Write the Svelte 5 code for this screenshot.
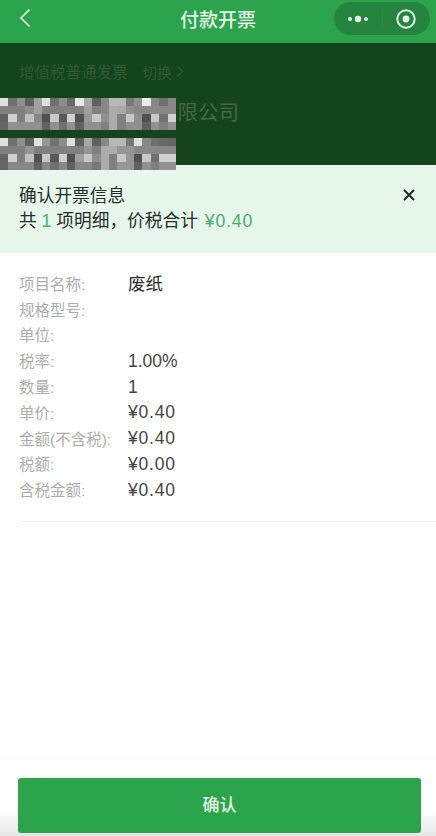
<script lang="ts">
	const rows = [
		{ label: '项目名称:', value: '废纸', big: true },
		{ label: '规格型号:', value: '' },
		{ label: '单位:', value: '' },
		{ label: '税率:', value: '1.00%' },
		{ label: '数量:', value: '1' },
		{ label: '单价:', value: '¥0.40', money: true },
		{ label: '金额(不含税):', value: '¥0.40', money: true },
		{ label: '税额:', value: '¥0.00', money: true },
		{ label: '含税金额:', value: '¥0.40', money: true }
	];

	// gray levels of the blurred-out company name, one row per line
	const mosaicA = [
		[224, 112, 144, 96, 160, 224, 112, 140, 104, 232, 168, 96, 136, 184, 184, 120, 144, 236, 136, 112, 136],
		[128, 128, 128, 140, 160, 128, 128, 128, 128, 128, 160, 128, 136, 172, 168, 144, 136, 136, 136, 136, 136],
		[96, 208, 128, 192, 136, 80, 200, 88, 208, 80, 152, 200, 144, 172, 128, 200, 144, 80, 200, 112, 208],
		[100, 144, 144, 144, 144, 96, 144, 112, 144, 96, 144, 144, 128, 172, 128, 144, 144, 96, 144, 128, 144]
	];
	const mosaicB = [
		[224, 112, 144, 96, 224, 150, 112, 140, 224, 96, 168, 96, 136, 184, 184, 120, 224, 136, 112, 104, 100],
		[128, 128, 128, 150, 128, 128, 128, 128, 128, 128, 150, 128, 172, 172, 150, 150, 136, 136, 136, 136, 136],
		[100, 208, 128, 192, 80, 200, 88, 208, 80, 160, 200, 144, 172, 128, 200, 150, 80, 200, 112, 208, 208],
		[100, 136, 136, 136, 96, 136, 112, 136, 96, 136, 136, 120, 172, 128, 150, 150, 96, 144, 128, 144, 144]
	];
	const CELL_W = 176 / 21;
</script>

{#snippet mosaic(cells: number[][], cls: string)}
	<svg class="mosaic {cls}" width="176" height="32" viewBox="0 0 176 32" shape-rendering="crispEdges">
		{#each cells as row, r}
			{#each row as g, c}
				<rect x={c * CELL_W} y={r * 8} width={CELL_W + 0.5} height="8.5" fill="rgb({g},{g},{g})" />
			{/each}
		{/each}
	</svg>
{/snippet}

<div class="page">
	<header class="nav">
		<svg class="back" width="12" height="20" viewBox="0 0 12 20">
			<path d="M10.5 1.5 L2 10 L10.5 18.5" fill="none" stroke="#dff2e3" stroke-width="1.7" />
		</svg>
		<h1>付款开票</h1>
		<div class="capsule">
			<svg width="22" height="8" viewBox="0 0 22 8">
				<circle cx="3" cy="4" r="2" fill="#e6f5e9" />
				<circle cx="11" cy="4" r="3.2" fill="#e6f5e9" />
				<circle cx="19" cy="4" r="2" fill="#e6f5e9" />
			</svg>
			<span class="sep"></span>
			<svg width="22" height="22" viewBox="0 0 22 22">
				<circle cx="11" cy="11" r="8.7" fill="none" stroke="#e6f5e9" stroke-width="2" />
				<circle cx="11" cy="11" r="3.4" fill="#e6f5e9" />
			</svg>
		</div>
	</header>

	<section class="invoice">
		<div class="type">
			<span>增值税普通发票</span>
			<span class="switch">切换</span>
			<svg width="8" height="13" viewBox="0 0 8 13">
				<path d="M1.5 1.5 L6.5 6.5 L1.5 11.5" fill="none" stroke="#2f5c37" stroke-width="1.2" />
			</svg>
		</div>
		<div class="company">有限公司</div>
		{@render mosaic(mosaicA, 'first')}
		{@render mosaic(mosaicB, 'second')}
	</section>

	<section class="notice">
		<div class="notice-text">
			<div>确认开票信息</div>
			<div>共 <em>1</em> 项明细，价税合计 <em class="total">¥0.40</em></div>
		</div>
		<svg class="close" width="12" height="12" viewBox="0 0 12 12">
			<path d="M1 1 L11 11 M11 1 L1 11" stroke="#1f2a22" stroke-width="2" />
		</svg>
	</section>

	<main class="detail">
		{#each rows as row}
			<div class="row">
				<span class="label">{row.label}</span>
				<span class="value" class:big={row.big} class:money={row.money}>{row.value}</span>
			</div>
		{/each}
		<div class="divider"></div>
	</main>

	<footer class="foot">
		<button>确认</button>
	</footer>
</div>

<style>
	:global(body) {
		margin: 0;
		background: #fff;
	}

	.page {
		display: flex;
		flex-direction: column;
		height: 836px;
		overflow: hidden;
		font-family: "Liberation Sans", "Noto Sans CJK SC", sans-serif;
	}

	.nav {
		position: relative;
		flex: none;
		height: 43px;
		display: flex;
		align-items: center;
		justify-content: center;
		background: #2ca44c;
	}

	.back {
		position: absolute;
		left: 19px;
		top: 8px;
	}

	h1 {
		margin: -6px 0 0;
		font-size: 19px;
		font-weight: 500;
		color: #e4f4e8;
	}

	.capsule {
		position: absolute;
		left: 334px;
		top: 2px;
		width: 96px;
		height: 33px;
		box-sizing: border-box;
		padding: 0 13px 0 13px;
		display: flex;
		align-items: center;
		justify-content: space-between;
		border-radius: 17px;
		background: #25853f;
	}

	.sep {
		width: 1px;
		height: 20px;
		background: #278b42;
	}

	.invoice {
		position: relative;
		flex: none;
		height: 122px;
		box-sizing: border-box;
		padding: 17px 0 0 19px;
		background: #14431c;
		color: #2f5c37;
	}

	.type {
		display: flex;
		align-items: center;
		height: 22px;
		font-size: 15.5px;
	}

	.switch {
		margin: 0 4px 0 15px;
		font-size: 14.5px;
	}

	.company {
		margin: 16px 0 0 138px;
		font-size: 20.5px;
		line-height: 30px;
		color: #43694a;
		white-space: nowrap;
	}

	.mosaic {
		position: absolute;
		left: 0;
		display: block;
		filter: blur(0.7px);
	}

	.first {
		top: 55px;
	}

	.second {
		top: 95px;
	}

	.notice {
		flex: none;
		height: 88px;
		box-sizing: border-box;
		padding: 18px 21px 0 19px;
		display: flex;
		justify-content: space-between;
		align-items: flex-start;
		background: #e8f7ec;
		color: #262d28;
		font-size: 17.7px;
		line-height: 26px;
	}

	.notice-text > div + div {
		margin-top: -1px;
	}

	.notice em {
		font-style: normal;
		color: #4cad6d;
	}

	.notice .total {
		margin-left: 2px;
		letter-spacing: 0.8px;
	}

	.close {
		margin-top: 6px;
	}

	.detail {
		flex: 1;
		padding: 17px 0 0 19px;
	}

	.row {
		display: flex;
		align-items: center;
		height: 25.8px;
	}

	.label {
		flex: none;
		width: 109px;
		font-size: 15.5px;
		color: #adadad;
		white-space: nowrap;
	}

	.value {
		padding-top: 2px;
		font-size: 17.5px;
		color: #444;
	}

	.value.big {
		padding-top: 0;
		color: #2b2b2b;
	}

	.value.money {
		letter-spacing: 0.8px;
	}

	.divider {
		height: 1px;
		margin-top: 19px;
		background: #f3f3f3;
	}

	.foot {
		flex: none;
		height: 78px;
		box-sizing: border-box;
		padding: 19px 15px 3px 18px;
		border-top: 1px solid #fbfbfb;
		background: linear-gradient(#fff 0, #fff 66%, #e6e6e6 100%);
	}

	button {
		display: block;
		width: 100%;
		height: 55px;
		padding: 0 0 4px;
		border: none;
		border-radius: 3px;
		background: #2ca44c;
		color: #e4f4e8;
		font: 500 17px "Liberation Sans", "Noto Sans CJK SC", sans-serif;
	}
</style>
